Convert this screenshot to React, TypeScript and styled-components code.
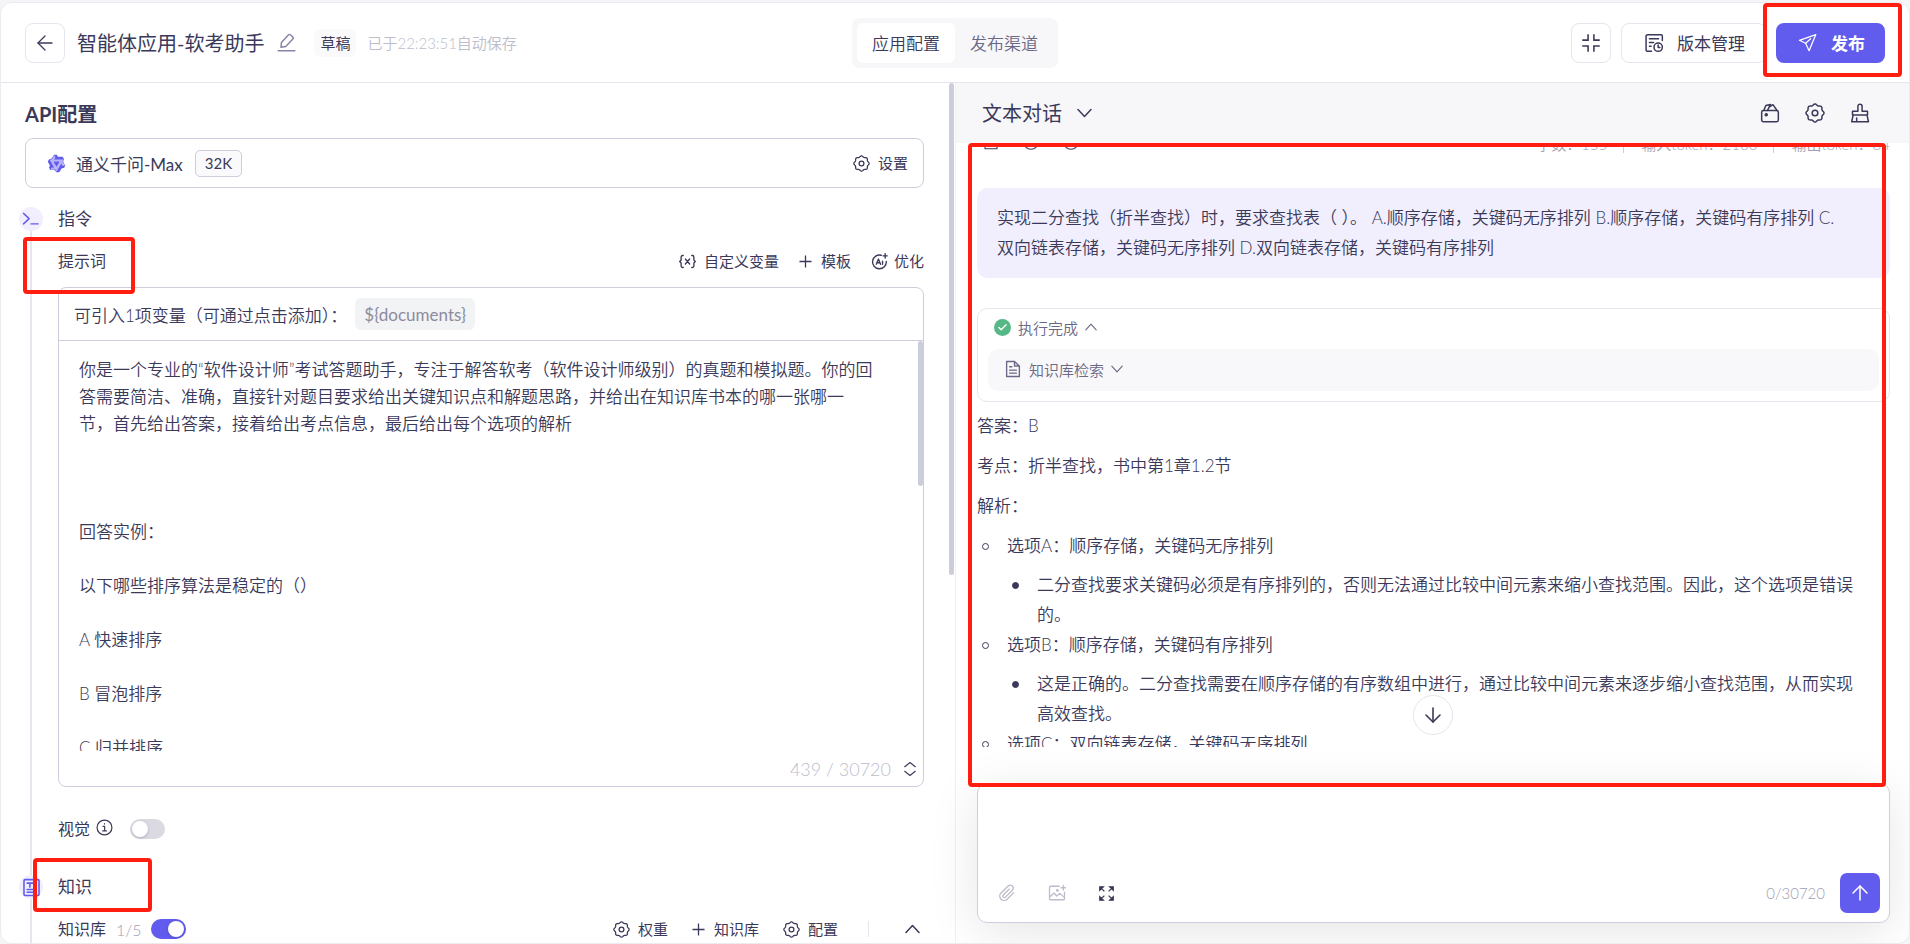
import React from "react";
import styled, { createGlobalStyle, css } from "styled-components";
import { ArrowDown, ArrowLeft, ArrowUp, Check } from "lucide-react";

const c = {
  ink: "#3b3959",
  muted: "#6a6886",
  faint: "#9f9eb1",
  pale: "#bdbdcb",
  line: "#cecddd",
  hair: "#e6e5ee",
  soft: "#f7f7fa",
  tint: "#f1effe",
  brand: "#615ced",
  mark: "#ff1e10",
  thumb: "#cbcddb",
  ok: "#56b886",
};

const GlobalStyle = createGlobalStyle`
  *, *::before, *::after { box-sizing: border-box; }
  body { margin: 0; background: #f5f5f7; }
  body, button, textarea, select, input {
    font-family: Lato, "Noto Sans CJK SC", sans-serif;
    color: ${c.ink};
  }
  button { cursor: pointer; border: 0; background: none; padding: 0; }
  h1, h2, h3, p, ul { margin: 0; padding: 0; }
  ul { list-style: none; }
  svg { display: block; flex: none; }
`;

/* Running text: light Latin letters beside demi-light Chinese ones. */
const lightText = css`
  font-family: Lato, "Noto Sans CJK SC DemiLight", "Noto Sans CJK SC", sans-serif;
  font-weight: 300;
`;

/* ---------- shared parts ---------- */

const Mark = styled.span<{ $inset: string }>`
  position: absolute;
  inset: ${(p) => p.$inset};
  border: 4px solid ${c.mark};
  border-radius: 4px;
  pointer-events: none;
`;

const Anchor = styled.div`
  position: relative;
`;

const Shell = styled.div`
  display: flex;
  flex-direction: column;
  height: calc(100vh - 2px);
  min-height: 640px;
  margin-top: 2px;
  border: 1px solid #ececf0;
  border-radius: 12px;
  background: #fff;
  overflow: hidden;
`;

const ToolButton = styled.button<{ $tight?: boolean }>`
  display: flex;
  align-items: center;
  gap: ${(p) => (p.$tight ? 6 : 8)}px;
  font-size: 15px;
  line-height: 24px;
`;

const Tools = styled.div<{ $gap: number }>`
  display: flex;
  align-items: center;
  gap: ${(p) => p.$gap}px;
  margin-left: auto;
`;

const Toggle = styled.input`
  appearance: none;
  width: 35px;
  height: 20px;
  margin: 0;
  border-radius: 10px;
  background: #dbdae2;
  display: flex;
  align-items: center;
  padding: 0 2px;
  cursor: pointer;
  &::before {
    content: "";
    width: 16px;
    height: 16px;
    border-radius: 50%;
    background: #fff;
    box-shadow: 0 1px 3px rgba(40, 30, 90, 0.25);
  }
  &:checked {
    background: ${c.brand};
    justify-content: flex-end;
  }
`;

/* ---------- top bar ---------- */

const TopBar = styled.header`
  display: grid;
  grid-template-columns: minmax(0, 1fr) auto minmax(0, 1fr);
  align-items: center;
  flex: none;
  height: 80px;
  padding: 0 24px;
  border-bottom: 1px solid ${c.hair};
`;

const TopStart = styled.div`
  display: flex;
  align-items: center;
  white-space: nowrap;
`;

const TopEnd = styled.div`
  display: flex;
  justify-content: flex-end;
  gap: 10px;
  white-space: nowrap;
`;

const OutlineButton = styled.button<{ $wide?: boolean }>`
  display: flex;
  align-items: center;
  justify-content: center;
  gap: 13px;
  width: ${(p) => (p.$wide ? "auto" : "40px")};
  height: 40px;
  padding: ${(p) => (p.$wide ? "0 20px 0 22px" : "0")};
  border: 1px solid ${c.hair};
  border-radius: 8px;
  font-size: 17px;
`;

const Title = styled.h1`
  margin-left: 12px;
  font-size: 20px;
  line-height: 28px;
  font-weight: 400;
`;

const EditButton = styled.button`
  margin-left: 13px;
`;

const Draft = styled.span`
  margin-left: 18px;
  padding: 0 6px;
  border-radius: 6px;
  background: #fafafc;
  font-size: 15px;
  line-height: 28px;
`;

const Saved = styled.span`
  ${lightText}
  margin-left: 11px;
  font-size: 15px;
  line-height: 28px;
  color: ${c.pale};
`;

const Tabs = styled.nav`
  display: flex;
  padding: 5px;
  border-radius: 8px;
  background: ${c.soft};
`;

const Tab = styled.button<{ $active?: boolean }>`
  ${lightText}
  height: 40px;
  padding: 0 15px;
  border-radius: 6px;
  font-size: 17px;
  ${(p) =>
    p.$active
      ? css`
          background: #fff;
          color: ${c.ink};
        `
      : css`
          color: ${c.muted};
        `}
`;

const Publish = styled.button`
  display: flex;
  align-items: center;
  gap: 14px;
  height: 40px;
  padding: 0 20px 0 22px;
  border-radius: 8px;
  background: ${c.brand};
  color: #fff;
  font-size: 17px;
  font-weight: 700;
`;

/* ---------- columns ---------- */

const Columns = styled.main`
  display: grid;
  grid-template-columns: minmax(0, 1fr) minmax(0, 1fr);
  flex: 1;
  min-height: 0;
`;

const ConfigPane = styled.section`
  display: flex;
  min-height: 0;
  overflow: hidden;
`;

const ConfigBody = styled.div`
  flex: 1;
  min-width: 0;
  padding: 17px 25px 0 0;
`;

const PaneThumb = styled.div`
  flex: none;
  width: 5px;
  height: 492px;
  margin-right: 1px;
  border-radius: 3px;
  background: ${c.thumb};
`;

const Heading = styled.h2`
  margin-left: 24px;
  font-size: 20px;
  line-height: 28px;
  font-weight: 700;
`;

const ModelCard = styled.div`
  display: flex;
  align-items: center;
  height: 50px;
  margin: 10px 0 19px 24px;
  padding: 0 15px 0 21px;
  border: 1px solid ${c.line};
  border-radius: 8px;
  font-size: 17px;
`;

const ModelName = styled.span`
  margin-left: 10px;
`;

const Badge = styled.span`
  margin-left: 12px;
  padding: 0 9px;
  border: 1px solid ${c.line};
  border-radius: 5px;
  background: #fafafc;
  font-size: 15px;
  line-height: 25px;
`;

const Step = styled.section`
  display: grid;
  grid-template-columns: 57px minmax(0, 1fr);
`;

const Rail = styled.div`
  display: flex;
  flex-direction: column;
  align-items: center;
  width: 24px;
  margin-left: 18px;
  &::after {
    content: "";
    flex: 1;
    width: 2px;
    background: #e7e6ee;
  }
`;

const Node = styled.span`
  display: flex;
  align-items: center;
  justify-content: center;
  width: 24px;
  height: 24px;
  border-radius: 50%;
  background: ${c.tint};
  color: ${c.brand};
`;

const StepBody = styled.div`
  padding-bottom: 34px;
`;

const StepTitle = styled.h3`
  font-size: 17px;
  line-height: 24px;
  font-weight: 400;
`;

const Row = styled.div<{ $top: number }>`
  display: flex;
  align-items: center;
  min-height: 24px;
  margin-top: ${(p) => p.$top}px;
`;

const RowLabel = styled.label`
  font-size: 16px;
  line-height: 24px;
`;

const InfoButton = styled.button`
  margin: 0 17px 4px 6px;
`;

const Count = styled.span`
  margin: 0 9px 0 10px;
  font-size: 16px;
  font-weight: 300;
  color: ${c.faint};
`;

const Divider = styled.span`
  width: 1px;
  height: 16px;
  margin: 0 12px 0 6px;
  background: ${c.hair};
`;

const CollapseButton = styled.button`
  margin-right: 4px;
`;

const PromptBox = styled.div`
  margin-top: 14px;
  border: 1px solid ${c.line};
  border-radius: 8px;
  overflow: hidden;
`;

const PromptHead = styled.div`
  ${lightText}
  display: flex;
  align-items: center;
  height: 53px;
  padding-left: 15px;
  border-bottom: 1px solid ${c.line};
  font-size: 17px;
`;

const Chip = styled.button`
  height: 32px;
  margin-left: 8px;
  padding: 0 9px;
  border-radius: 6px;
  background: #f2f3f5;
  color: #8d8b9f;
  font-size: 17px;
`;

const Editor = styled.div`
  display: flex;
  height: 410px;
`;

const PromptText = styled.textarea`
  ${lightText}
  flex: 1;
  min-width: 0;
  padding: 15px 42px 0 20px;
  border: 0;
  outline: 0;
  resize: none;
  overflow: hidden;
  background: transparent;
  font-size: 17px;
  line-height: 27px;
`;

const EditorThumb = styled.div`
  width: 5px;
  height: 145px;
  border-radius: 3px;
  background: ${c.thumb};
`;

const PromptFoot = styled.div`
  display: flex;
  align-items: center;
  justify-content: flex-end;
  gap: 12px;
  height: 35px;
  padding-right: 6px;
  font-size: 18px;
  font-weight: 300;
  color: ${c.pale};
`;

/* ---------- chat ---------- */

const ChatPane = styled.section`
  display: flex;
  flex-direction: column;
  min-height: 0;
  border-left: 1px solid #efeff4;
`;

const ChatHead = styled.div`
  display: flex;
  align-items: center;
  flex: none;
  height: 60px;
  padding: 0 39px 0 26px;
  background: ${c.soft};
`;

const ModeField = styled.label`
  display: grid;
  align-items: center;
  > * {
    grid-area: 1 / 1;
  }
  svg {
    justify-self: end;
    pointer-events: none;
  }
`;

const ModeSelect = styled.select`
  appearance: none;
  border: 0;
  outline: 0;
  background: transparent;
  padding: 0 30px 0 0;
  font-size: 20px;
  line-height: 28px;
`;

const ChatArea = styled.div`
  position: relative;
  flex: 1;
  min-height: 0;
  padding: 0 19px 36px 21px;
`;

const Thread = styled.div`
  height: 100%;
  overflow: hidden;
`;

const Stats = styled.div`
  ${lightText}
  display: flex;
  align-items: flex-end;
  height: 10px;
  padding-left: 6px;
  font-size: 15px;
  line-height: 18px;
  color: ${c.faint};
`;

const StatIcons = styled.div`
  display: flex;
  gap: 24px;
  padding-bottom: 3px;
  color: ${c.ink};
`;

const StatTexts = styled.div`
  display: flex;
  gap: 16px;
  margin-left: auto;
  span + span {
    border-left: 1px solid ${c.line};
    padding-left: 17px;
  }
`;

const Bubble = styled.p`
  ${lightText}
  margin-top: 35px;
  padding: 15px 44px 15px 20px;
  border-radius: 10px;
  background: ${c.tint};
  font-size: 17px;
  line-height: 30px;
`;

const RunCard = styled.div`
  margin-top: 30px;
  padding: 7px 10px 10px;
  border: 1px solid ${c.hair};
  border-radius: 10px;
`;

const RunLine = styled.button`
  ${lightText}
  display: flex;
  align-items: center;
  gap: 7px;
  height: 24px;
  padding: 0 0 2px 6px;
  font-size: 15px;
  color: ${c.muted};
`;

const RunItem = styled.div`
  display: flex;
  align-items: center;
  height: 42px;
  margin-top: 9px;
  padding-left: 10px;
  border-radius: 10px;
  background: #f8f8fb;
`;

const Dot = styled.span`
  display: flex;
  align-items: center;
  justify-content: center;
  width: 17px;
  height: 17px;
  border-radius: 50%;
  background: ${c.ok};
  color: #fff;
`;

const Answer = styled.div`
  ${lightText}
  display: flex;
  flex-direction: column;
  gap: 10px;
  margin-top: 9px;
  font-size: 17px;
  line-height: 30px;
`;

const Item = styled.li<{ $filled?: boolean }>`
  display: grid;
  grid-template-columns: 30px minmax(0, 1fr);
  &::before {
    content: "";
    width: 7px;
    height: 7px;
    margin: 12px 0 0 5px;
    border: 1px solid ${c.ink};
    border-radius: 50%;
    background: ${(p) => (p.$filled ? c.ink : "transparent")};
  }
`;

const Reasons = styled.ul`
  margin-top: 9px;
  padding-right: 28px;
`;

const JumpDown = styled.button`
  position: absolute;
  bottom: 48px;
  left: calc(50% - 20px);
  display: flex;
  align-items: center;
  justify-content: center;
  width: 40px;
  height: 40px;
  border: 1px solid ${c.hair};
  border-radius: 50%;
  background: #fff;
`;

const Composer = styled.form`
  display: flex;
  flex-direction: column;
  flex: none;
  height: 140px;
  margin: 0 19px 20px 21px;
  padding: 9px 9px 9px 20px;
  border: 1px solid ${c.line};
  border-radius: 10px;
  background: #fff;
  box-shadow: 0 10px 50px rgba(0, 0, 0, 0.1);
`;

const Message = styled.textarea`
  flex: 1;
  border: 0;
  outline: 0;
  resize: none;
  background: transparent;
  font-size: 17px;
`;

const ComposerBar = styled.div`
  display: flex;
  align-items: center;
  justify-content: space-between;
  height: 40px;
`;

const ComposerGroup = styled.div<{ $gap: number }>`
  display: flex;
  align-items: center;
  gap: ${(p) => p.$gap}px;
`;

const Limit = styled.span`
  font-size: 15px;
  font-weight: 300;
  color: ${c.faint};
`;

const Send = styled.button`
  display: flex;
  align-items: center;
  justify-content: center;
  width: 40px;
  height: 40px;
  border-radius: 7px;
  background: ${c.brand};
  color: #fff;
`;

/* ---------- icons ---------- */

type IconProps = { size?: number; color?: string; width?: number; children?: React.ReactNode };

const Icon = ({ size = 18, color = "currentColor", width = 1.6, children }: IconProps) => (
  <svg width={size} height={size} viewBox="0 0 24 24" fill="none" stroke={color} strokeWidth={width} strokeLinecap="round" strokeLinejoin="round" aria-hidden="true">
    {children}
  </svg>
);

const Caret = ({ up, large }: { up?: boolean; large?: boolean }) => (
  <svg width={large ? 15 : 12} height={large ? 10 : 8} viewBox="0 0 15 10" fill="none" stroke="currentColor" strokeWidth={large ? 1.5 : 1.4} strokeLinecap="round" strokeLinejoin="round" aria-hidden="true">
    <path d={up ? "M1 8.500 7.500 1.500 14 8.500" : "M1 1.500 7.500 8.500 14 1.500"} />
  </svg>
);

const PlusIcon = () => (
  <svg width="14" height="13" viewBox="0 0 14 13" stroke="currentColor" strokeWidth="1.300" aria-hidden="true">
    <path d="M6.500 .5v12M.5 6.500h12" />
  </svg>
);

const gearPath = (() => {
  const pts: string[] = [];
  for (let i = 0; i < 96; i++) {
    const a = (i / 96) * Math.PI * 2;
    const r = 10 + 0.8 * Math.cos(8 * a);
    pts.push(`${(12 + r * Math.sin(a)).toFixed(2)} ${(12 - r * Math.cos(a)).toFixed(2)}`);
  }
  return `M${pts.join("L")}Z`;
})();

const Gear = ({ size = 17 }: IconProps) => (
  <Icon size={size} width={1.8}>
    <path d={gearPath} />
    <circle cx="12" cy="12" r="3.4" />
  </Icon>
);

const Pen = () => (
  <Icon size={19} color="#8583a8" width={1.8}>
    <path d="M5 18 5.600 12 14.600 2.200a1.600 1.600 0 0 1 2.300 0l3.200 3a1.600 1.600 0 0 1 0 2.300L11 17Z" />
    <path d="M1.500 22.500h21" />
  </Icon>
);

const Shrink = () => (
  <Icon size={20} width={1.9}>
    <path d="M8.500 1.500v7h-7M15.500 1.500v7h7M8.500 22.500v-7h-7M15.500 22.500v-7h7" strokeLinecap="butt" strokeLinejoin="miter" />
  </Icon>
);

const Versions = () => (
  <Icon size={20} width={1.8}>
    <path d="M9 22H4.500a2 2 0 0 1-2-2V4a2 2 0 0 1 2-2h16a1.500 1.500 0 0 1 1.500 1.500V9" />
    <path d="M6.500 7h11M6.500 11.500h5M6.500 16h2" />
    <circle cx="17" cy="17" r="5" />
    <path d="M17 14.500V17.500h2" />
  </Icon>
);

const Plane = () => (
  <Icon size={19} width={1.6}>
    <path d="M22.500 2 1.800 9.200 9.600 13 14 22.300Z" />
    <path d="M9.600 13 16 7.200" />
  </Icon>
);

const Qwen = () => (
  <svg width="19" height="19" viewBox="0 0 24 24" aria-hidden="true">
    <path fill="#b9b5f8" d="M9.200 1.800 20.300 6.800 21.700 17.100 12.200 22.100 3.400 17.400 3.200 6.900Z" />
    <path fill={c.brand} fillRule="evenodd" d="M12.604 1.34c.393.69.784 1.382 1.174 2.075a.18.18 0 00.157.091h5.552c.174 0 .322.11.446.327l1.454 2.57c.19.337.24.478.024.837-.26.43-.513.864-.76 1.3l-.367.658c-.106.196-.223.28-.04.512l2.652 4.637c.172.301.111.494-.043.77-.437.785-.882 1.564-1.335 2.34-.159.272-.352.375-.68.37-.777-.016-1.552-.01-2.327.016a.099.099 0 00-.081.05 575.097 575.097 0 01-2.705 4.74c-.169.293-.38.363-.725.364-.997.003-2.002.004-3.017.002a.537.537 0 01-.465-.271l-1.335-2.323a.09.09 0 00-.083-.049H4.982c-.285.03-.553-.001-.805-.092l-1.603-2.77a.543.543 0 01-.002-.54l1.207-2.12a.198.198 0 000-.197 550.951 550.951 0 01-1.875-3.272l-.79-1.395c-.16-.31-.173-.496.095-.965.465-.813.927-1.625 1.387-2.436.132-.234.304-.334.584-.335a338.3 338.3 0 012.589-.001.124.124 0 00.107-.063l2.806-4.895a.488.488 0 01.422-.246c.524-.001 1.053 0 1.583-.006L11.704 1c.341-.003.724.032.9.34zm-3.432.403a.06.06 0 00-.052.03L6.254 6.788a.157.157 0 01-.135.078H3.253c-.056 0-.07.025-.041.074l5.81 10.156c.025.042.013.062-.034.063l-2.795.015a.218.218 0 00-.2.116l-1.32 2.31c-.044.078-.021.118.068.118l5.716.008c.046 0 .08.02.104.061l1.403 2.454c.046.081.092.082.139 0l5.006-8.76.783-1.382a.055.055 0 01.096 0l1.424 2.53a.122.122 0 00.107.062l2.763-.02a.04.04 0 00.035-.02.041.041 0 000-.04l-2.900-5.086a.108.108 0 010-.113l.293-.507 1.120-1.977c.024-.041.012-.062-.035-.062H9.200c-.059 0-.073-.026-.043-.077l1.434-2.505a.107.107 0 000-.114L9.225 1.774a.06.06 0 00-.053-.031zm6.290 8.020c.046 0 .058.02.034.06l-.832 1.465-2.613 4.585a.056.056 0 01-.05.029.058.058 0 01-.05-.029L8.498 9.841c-.02-.034-.01-.052.028-.054l.216-.012 6.722-.012z" />
    <path fill={c.brand} d="M8.500 9.800h7l-3.500 6.100Z" />
  </svg>
);

const Braces = () => (
  <Icon size={17} width={1.9}>
    <path d="M6 3.500H5a2 2 0 0 0-2 2V10l-2 2 2 2v4.500a2 2 0 0 0 2 2h1M18 3.500h1a2 2 0 0 1 2 2V10l2 2-2 2v4.500a2 2 0 0 1-2 2h-1" />
    <path d="m9 8.500 6 7M15 8.500l-6 7" />
  </Icon>
);

const Sparkle = () => (
  <Icon size={17} width={1.9}>
    <path d="M14.500 3.200A9.700 9.700 0 1 0 21.600 12" />
    <path d="M20 1v6M17 4h6" />
    <path d="m7.500 16 3-7.500 3 7.500M8.600 13.700h3.800M16.300 11.500V16" />
  </Icon>
);

const Terminal = () => (
  <Icon size={18} width={1.9}>
    <path d="m2 4.500 7.500 7-7.500 7M12 18.500h9.500" />
  </Icon>
);

const Knowledge = () => (
  <Icon size={19} width={2}>
    <rect x="2.500" y="2" width="19" height="20" rx="1.500" />
    <path d="M6.500 6.500h7M10 6.500v5M16.500 10.500h1M6.500 14.500h11M6.500 18h11" />
  </Icon>
);

const Info = () => (
  <Icon size={17} width={1.7}>
    <circle cx="12" cy="12" r="10.500" />
    <path d="M10 10.500h2.200v6M9.500 16.800h5.200M12 6.600v.6" />
  </Icon>
);

const Sort = () => (
  <Icon size={14} color={c.ink} width={2}>
    <path d="m3 8 9-7 9 7M3 16l9 7 9-7" />
  </Icon>
);

const Wallet = () => (
  <Icon size={20} width={1.8}>
    <rect x="2" y="9" width="20" height="13.500" rx="2" />
    <path d="M4.500 9 7 3l5.500-1.300L9 9M11.500 4.500l4-2.500 5 7" />
    <circle cx="7.500" cy="14" r="1.200" fill="currentColor" />
  </Icon>
);

const Broom = () => (
  <Icon size={20} width={1.8}>
    <path d="M9.500 10V4a2.500 2.500 0 0 1 5 0v6H21v4.500H3V10ZM3.800 14.500 2 22.500h20.200l-1.800-8M8 22v-4" />
  </Icon>
);

const Doc = () => (
  <Icon size={18} width={1.8}>
    <path d="M3.500 22V2H14l6.500 6v14ZM14 2v6h6.500M7.500 9h3M7.500 13.500h9M7.500 17.500h9" />
  </Icon>
);

const Clip = () => (
  <Icon size={18} color="#bdbccb" width={1.8}>
    <path d="m21 11.500-8.800 8.800a5.800 5.800 0 0 1-8.200-8.200l9.500-9.500a4 4 0 0 1 5.700 5.700L9.900 17.500a2 2 0 0 1-2.900-2.900L15 6.800" />
  </Icon>
);

const Picture = () => (
  <Icon size={18} color="#bdbccb" width={1.7}>
    <path d="M15 3H3.500A1.500 1.500 0 0 0 2 4.500v15A1.500 1.500 0 0 0 3.500 21h17a1.500 1.500 0 0 0 1.500-1.500V11M2.500 17l5.500-5 3.500 4 4-3.500 6 5M20.500 2v6M17.500 5h6" />
    <circle cx="12.500" cy="8.500" r="1" />
  </Icon>
);

const Expand = () => (
  <svg width="17" height="17" viewBox="0 0 24 24" fill={c.ink} stroke={c.ink} strokeWidth="1.800" aria-hidden="true">
    <path d="M2.500 2.500h5l-5 5ZM21.500 2.500v5l-5-5ZM2.500 21.500v-5l5 5ZM21.500 21.500h-5l5-5ZM4 4l5 5M20 4l-5 5M4 20l5-5M20 20l-5-5" />
  </svg>
);

/* ---------- content ---------- */

const prompt = [
  "你是一个专业的“软件设计师”考试答题助手，专注于解答软考（软件设计师级别）的真题和模拟题。你的回答需要简洁、准确，直接针对题目要求给出关键知识点和解题思路，并给出在知识库书本的哪一张哪一节，首先给出答案，接着给出考点信息，最后给出每个选项的解析",
  "",
  "",
  "",
  "回答实例：",
  "",
  "以下哪些排序算法是稳定的（）",
  "",
  "A 快速排序",
  "",
  "B 冒泡排序",
  "",
  "C 归并排序",
].join("\n");

const options = [
  {
    title: "选项A：顺序存储，关键码无序排列",
    reason: "二分查找要求关键码必须是有序排列的，否则无法通过比较中间元素来缩小查找范围。因此，这个选项是错误的。",
  },
  {
    title: "选项B：顺序存储，关键码有序排列",
    reason: "这是正确的。二分查找需要在顺序存储的有序数组中进行，通过比较中间元素来逐步缩小查找范围，从而实现高效查找。",
  },
  { title: "选项C：双向链表存储，关键码无序排列" },
];

const Header = () => (
  <TopBar>
    <TopStart>
      <OutlineButton aria-label="返回">
        <ArrowLeft size={24} strokeWidth={1.3} />
      </OutlineButton>
      <Title>智能体应用-软考助手</Title>
      <EditButton aria-label="编辑名称">
        <Pen />
      </EditButton>
      <Draft>草稿</Draft>
      <Saved>已于22:23:51自动保存</Saved>
    </TopStart>
    <Tabs>
      <Tab $active>应用配置</Tab>
      <Tab>发布渠道</Tab>
    </Tabs>
    <TopEnd>
      <OutlineButton aria-label="退出全屏">
        <Shrink />
      </OutlineButton>
      <OutlineButton $wide>
        <Versions />
        版本管理
      </OutlineButton>
      <Anchor>
        <Publish>
          <Plane />
          发布
        </Publish>
        <Mark $inset="-20px -17px -14px -13px" />
      </Anchor>
    </TopEnd>
  </TopBar>
);

const Config = () => (
  <ConfigPane>
    <ConfigBody>
      <Heading>API配置</Heading>
      <ModelCard>
        <Qwen />
        <ModelName>通义千问-Max</ModelName>
        <Badge>32K</Badge>
        <Tools $gap={0}>
          <ToolButton>
            <Gear />
            设置
          </ToolButton>
        </Tools>
      </ModelCard>

      <Step>
        <Rail>
          <Node>
            <Terminal />
          </Node>
        </Rail>
        <StepBody>
          <StepTitle>指令</StepTitle>
          <Row $top={18}>
            <Anchor>
              <RowLabel htmlFor="prompt">提示词</RowLabel>
              <Mark $inset="-12px -29px -21px -35px" />
            </Anchor>
            <Tools $gap={20}>
              <ToolButton>
                <Braces />
                自定义变量
              </ToolButton>
              <ToolButton>
                <PlusIcon />
                模板
              </ToolButton>
              <ToolButton $tight>
                <Sparkle />
                优化
              </ToolButton>
            </Tools>
          </Row>
          <PromptBox>
            <PromptHead>
              可引入1项变量（可通过点击添加）：
              <Chip>{"${documents}"}</Chip>
            </PromptHead>
            <Editor>
              <PromptText id="prompt" defaultValue={prompt} spellCheck={false} />
              <EditorThumb />
            </Editor>
            <PromptFoot>
              439 / 30720
              <Sort />
            </PromptFoot>
          </PromptBox>
          <Row $top={30}>
            <RowLabel htmlFor="vision">视觉</RowLabel>
            <InfoButton aria-label="视觉说明">
              <Info />
            </InfoButton>
            <Toggle id="vision" type="checkbox" />
          </Row>
        </StepBody>
      </Step>

      <Step>
        <Rail>
          <Node>
            <Knowledge />
          </Node>
        </Rail>
        <StepBody>
          <Row $top={0}>
            <Anchor>
              <StepTitle>知识</StepTitle>
              <Mark $inset="-17px -60px -13px -25px" />
            </Anchor>
          </Row>
          <Row $top={18}>
            <RowLabel htmlFor="kb">知识库</RowLabel>
            <Count>1/5</Count>
            <Toggle id="kb" type="checkbox" defaultChecked />
            <Tools $gap={24}>
              <ToolButton>
                <Gear />
                权重
              </ToolButton>
              <ToolButton>
                <PlusIcon />
                知识库
              </ToolButton>
              <ToolButton>
                <Gear />
                配置
              </ToolButton>
              <Divider />
              <CollapseButton aria-label="收起">
                <Caret up large />
              </CollapseButton>
            </Tools>
          </Row>
        </StepBody>
      </Step>
    </ConfigBody>
    <PaneThumb />
  </ConfigPane>
);

const Chat = () => (
  <ChatPane>
    <ChatHead>
      <ModeField>
        <ModeSelect aria-label="对话模式">
          <option>文本对话</option>
        </ModeSelect>
        <Caret large />
      </ModeField>
      <Tools $gap={25}>
        <ToolButton aria-label="素材">
          <Wallet />
        </ToolButton>
        <ToolButton aria-label="设置">
          <Gear size={20} />
        </ToolButton>
        <ToolButton aria-label="清空">
          <Broom />
        </ToolButton>
      </Tools>
    </ChatHead>

    <ChatArea>
      <Thread>
        <Stats>
          <StatIcons>
            <Icon size={16}>
              <rect x="3" y="2" width="18" height="20" />
            </Icon>
            <Icon size={16}>
              <circle cx="12" cy="12" r="11" />
            </Icon>
            <Icon size={16}>
              <circle cx="12" cy="12" r="11" />
            </Icon>
          </StatIcons>
          <StatTexts>
            <span>字数：155</span>
            <span>输入token：2166</span>
            <span>输出token：84</span>
          </StatTexts>
        </Stats>
        <Bubble>
          实现二分查找（折半查找）时，要求查找表（ ）。 A.顺序存储，关键码无序排列 B.顺序存储，关键码有序排列
          C.双向链表存储，关键码无序排列 D.双向链表存储，关键码有序排列
        </Bubble>
        <RunCard>
          <RunLine>
            <Dot>
              <Check size={11} strokeWidth={3} />
            </Dot>
            执行完成
            <Caret up />
          </RunLine>
          <RunItem>
            <RunLine>
              <Doc />
              知识库检索
              <Caret />
            </RunLine>
          </RunItem>
        </RunCard>
        <Answer>
          <p>答案：B</p>
          <p>考点：折半查找，书中第1章1.2节</p>
          <p>解析：</p>
          <ul>
            {options.map((o) => (
              <Item key={o.title}>
                <div>
                  {o.title}
                  {o.reason && (
                    <Reasons>
                      <Item $filled>{o.reason}</Item>
                    </Reasons>
                  )}
                </div>
              </Item>
            ))}
          </ul>
        </Answer>
      </Thread>
      <JumpDown aria-label="回到底部">
        <ArrowDown size={24} strokeWidth={1.6} />
      </JumpDown>
      <Mark $inset="0 23px -4px 12px" />
    </ChatArea>

    <Composer onSubmit={(e) => e.preventDefault()}>
      <Message aria-label="输入消息" />
      <ComposerBar>
        <ComposerGroup $gap={32}>
          <ToolButton type="button" aria-label="添加附件">
            <Clip />
          </ToolButton>
          <ToolButton type="button" aria-label="添加图片">
            <Picture />
          </ToolButton>
          <ToolButton type="button" aria-label="展开">
            <Expand />
          </ToolButton>
        </ComposerGroup>
        <ComposerGroup $gap={15}>
          <Limit>0/30720</Limit>
          <Send aria-label="发送">
            <ArrowUp size={24} strokeWidth={1.5} />
          </Send>
        </ComposerGroup>
      </ComposerBar>
    </Composer>
  </ChatPane>
);

export default function App() {
  return (
    <>
      <GlobalStyle />
      <Shell>
        <Header />
        <Columns>
          <Config />
          <Chat />
        </Columns>
      </Shell>
    </>
  );
}
